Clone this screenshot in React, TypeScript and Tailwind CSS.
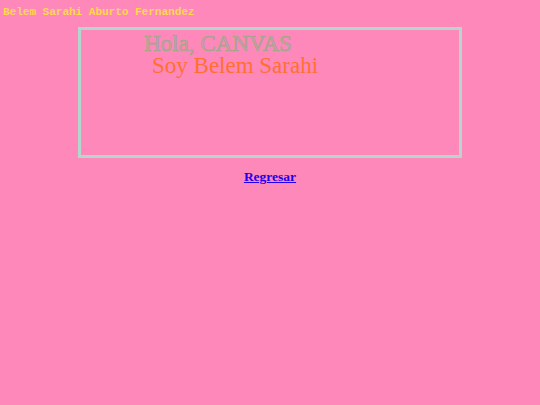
import React from "react";

export default function App() {
  return (
    <div className="min-h-[405px] w-[540px] bg-[#ff88bb]">
      <div className="pl-[3px] pt-[6px] font-['Liberation_Mono',monospace] text-[11px] font-bold leading-[13px] text-[#ffd84a]">
        Belem Sarahi Aburto Fernandez
      </div>
      <div className="mt-[8px] flex justify-center">
        <div className="h-[131px] w-[384px] border-[3px] border-[#b4d6cf]">
          <svg width="378" height="125" viewBox="0 0 378 125" className="block">
            <text
              x="63"
              y="21"
              fontFamily="'Liberation Serif', serif"
              fontSize="23"
              fill="#d498aa"
              stroke="#9ca888"
              strokeWidth="0.7"
            >
              Hola, CANVAS
            </text>
            <text
              x="71"
              y="43"
              fontFamily="'Liberation Serif', serif"
              fontSize="23"
              fill="#ff7030"
            >
              Soy Belem Sarahi
            </text>
          </svg>
        </div>
      </div>
      <div className="mt-[11px] text-center font-['Liberation_Serif',serif] text-[13.5px] font-bold leading-[16px]">
        <a href="#" className="text-[#2200ee] underline">
          Regresar
        </a>
      </div>
    </div>
  );
}
